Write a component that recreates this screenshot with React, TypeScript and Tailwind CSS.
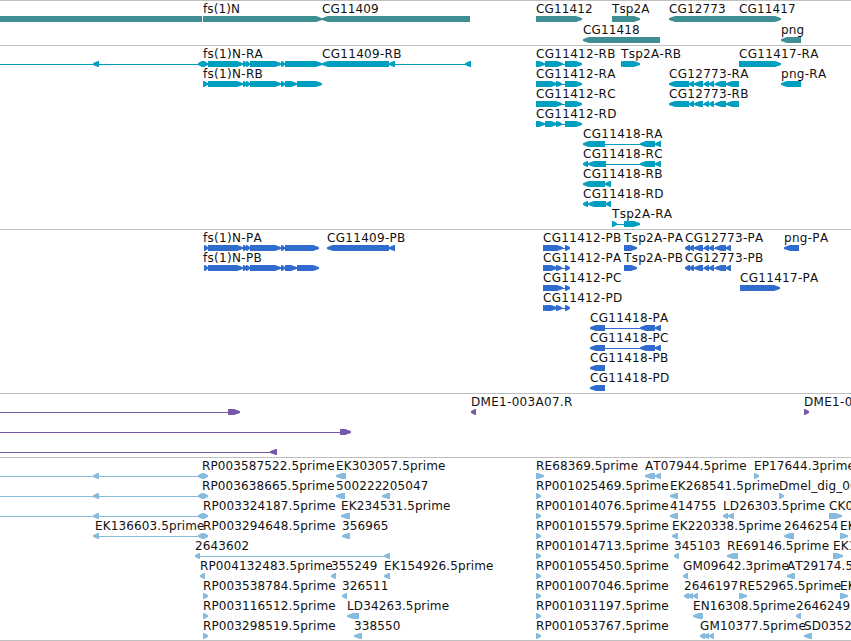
import React from 'react';

type Dir = '<' | '>' | '-';
type Block = [start: number, end: number, dir: Dir];

interface Feature {
  row: number;
  label?: string;
  x?: number;
  blocks: Block[];
  from?: number;
}

interface TrackProps {
  heightClass: string;
  colorClass: string;
  pitch?: number;
  features: Feature[];
}

const fsnStart: Block[] = [
  [208, 243, '>'],
  [243, 247, '>'],
  [246, 250, '>'],
  [250, 281, '>'],
  [281, 285, '>'],
];

const cg12773: Block[] = [
  [689, 694, '<'],
  [694, 703, '<'],
  [704, 709, '<'],
  [709, 714, '<'],
  [715, 726, '<'],
];

const upstream: Block[] = [
  [93, 99, '<'],
  [198, 203, '<'],
  [203, 208, '>'],
];

const genes: Feature[] = [
  { row: 0, blocks: [[0, 202, '-']] },
  { row: 0, label: 'fs(1)N', x: 203, blocks: [[203, 322, '>']] },
  { row: 0, label: 'CG11409', x: 322, blocks: [[322, 470, '<']] },
  { row: 0, label: 'CG11412', x: 536, blocks: [[536, 582, '>']] },
  { row: 0, label: 'Tsp2A', x: 612, blocks: [[612, 640, '>']] },
  { row: 0, label: 'CG12773', x: 669, blocks: [[669, 739, '<']] },
  { row: 0, label: 'CG11417', x: 739, blocks: [[739, 781, '>']] },
  { row: 1, label: 'CG11418', x: 583, blocks: [[583, 660, '<']] },
  { row: 1, label: 'png', x: 781, blocks: [[781, 801, '<']] },
];

const transcripts: Feature[] = [
  { row: 0, label: 'fs(1)N-RA', x: 203, from: 0, blocks: [...upstream, ...fsnStart, [285, 322, '>']] },
  { row: 1, label: 'fs(1)N-RB', x: 203, blocks: [[203, 208, '>'], ...fsnStart, [285, 297, '>'], [297, 322, '>']] },
  { row: 0, label: 'CG11409-RB', x: 322, blocks: [[322, 389, '<'], [389, 395, '<'], [465, 471, '<']] },
  { row: 0, label: 'CG11412-RB', x: 536, blocks: [[536, 545, '>'], [545, 563, '>'], [565, 582, '>']] },
  { row: 1, label: 'CG11412-RA', x: 536, blocks: [[536, 557, '>'], [556, 562, '>'], [565, 582, '>']] },
  { row: 2, label: 'CG11412-RC', x: 536, blocks: [[536, 562, '>'], [565, 582, '>']] },
  { row: 3, label: 'CG11412-RD', x: 536, blocks: [[536, 545, '>'], [545, 557, '>'], [556, 562, '>'], [565, 582, '>']] },
  { row: 0, label: 'Tsp2A-RB', x: 621, blocks: [[621, 625, '>'], [623, 640, '>']] },
  { row: 0, label: 'CG11417-RA', x: 739, blocks: [[739, 781, '>']] },
  { row: 1, label: 'CG12773-RA', x: 669, blocks: [[669, 689, '<'], ...cg12773, [726, 739, '<']] },
  { row: 2, label: 'CG12773-RB', x: 669, blocks: [[669, 689, '<'], ...cg12773, [726, 739, '<']] },
  { row: 1, label: 'png-RA', x: 781, blocks: [[781, 801, '<']] },
  { row: 4, label: 'CG11418-RA', x: 583, blocks: [[583, 605, '<'], [640, 655, '<'], [655, 661, '<']] },
  { row: 5, label: 'CG11418-RC', x: 583, blocks: [[583, 588, '<'], [588, 606, '<'], [640, 655, '<'], [655, 661, '<']] },
  { row: 6, label: 'CG11418-RB', x: 583, blocks: [[583, 605, '<'], [605, 611, '<']] },
  { row: 7, label: 'CG11418-RD', x: 583, blocks: [[583, 588, '<'], [588, 606, '<'], [606, 611, '<']] },
  { row: 8, label: 'Tsp2A-RA', x: 612, blocks: [[612, 617, '>'], [624, 640, '>']] },
];

const proteins: Feature[] = [
  { row: 0, label: 'fs(1)N-PA', x: 203, blocks: [[204, 208, '>'], ...fsnStart, [285, 319, '>']] },
  { row: 1, label: 'fs(1)N-PB', x: 203, blocks: [[204, 208, '>'], ...fsnStart, [285, 297, '>'], [297, 319, '>']] },
  { row: 0, label: 'CG11409-PB', x: 327, blocks: [[327, 389, '<'], [389, 395, '<']] },
  { row: 0, label: 'CG11412-PB', x: 543, blocks: [[543, 563, '>'], [565, 570, '>']] },
  { row: 1, label: 'CG11412-PA', x: 543, blocks: [[543, 557, '>'], [556, 562, '>'], [565, 570, '>']] },
  { row: 2, label: 'CG11412-PC', x: 543, blocks: [[543, 563, '>'], [565, 570, '>']] },
  { row: 3, label: 'CG11412-PD', x: 543, blocks: [[543, 547, '>'], [545, 557, '>'], [556, 562, '>'], [565, 570, '>']] },
  { row: 0, label: 'Tsp2A-PA', x: 624, blocks: [[624, 637, '>']] },
  { row: 1, label: 'Tsp2A-PB', x: 624, blocks: [[624, 637, '>']] },
  { row: 0, label: 'CG12773-PA', x: 685, blocks: [[685, 690, '<'], ...cg12773, [726, 731, '<']] },
  { row: 1, label: 'CG12773-PB', x: 685, blocks: [[685, 690, '<'], ...cg12773, [726, 731, '<']] },
  { row: 0, label: 'png-PA', x: 784, blocks: [[784, 799, '<']] },
  { row: 2, label: 'CG11417-PA', x: 740, blocks: [[740, 780, '>']] },
  { row: 4, label: 'CG11418-PA', x: 590, blocks: [[590, 605, '<'], [640, 655, '<'], [655, 661, '<']] },
  { row: 5, label: 'CG11418-PC', x: 590, blocks: [[590, 605, '<'], [640, 655, '<'], [655, 661, '<']] },
  { row: 6, label: 'CG11418-PB', x: 590, blocks: [[590, 605, '<']] },
  { row: 7, label: 'CG11418-PD', x: 590, blocks: [[590, 605, '<']] },
];

const clones: Feature[] = [
  { row: 0, from: 0, blocks: [[228, 240, '>']] },
  { row: 1, from: 0, blocks: [[340, 351, '>']] },
  { row: 2, from: 0, blocks: [[270, 277, '<']] },
  { row: 0, label: 'DME1-003A07.R', x: 471, blocks: [[471, 476, '<']] },
  { row: 0, label: 'DME1-0', x: 804, blocks: [[804, 809, '>']] },
];

const ests: Feature[] = [
  { row: 0, label: 'RP003587522.5prime', x: 202, from: 0, blocks: upstream },
  { row: 1, label: 'RP003638665.5prime', x: 202, from: 0, blocks: upstream },
  { row: 2, label: 'RP003324187.5prime', x: 203, from: 0, blocks: upstream },
  { row: 3, label: 'EK136603.5prime', x: 95, blocks: [] },
  { row: 3, label: 'RP003294648.5prime', x: 203, blocks: upstream },
  { row: 4, label: '2643602', x: 195, blocks: [[195, 200, '<'], [384, 390, '<']] },
  { row: 5, label: 'RP004132483.5prime', x: 200, blocks: [[200, 205, '<']] },
  { row: 6, label: 'RP003538784.5prime', x: 203, blocks: [[203, 208, '>']] },
  { row: 7, label: 'RP003116512.5prime', x: 203, blocks: [[203, 208, '>']] },
  { row: 8, label: 'RP003298519.5prime', x: 203, blocks: [[203, 208, '>']] },

  { row: 0, label: 'EK303057.5prime', x: 336, blocks: [[336, 346, '<']] },
  { row: 1, label: '500222', x: 336, blocks: [[336, 345, '<']] },
  { row: 1, label: '205047', x: 382, blocks: [[382, 390, '<']] },
  { row: 2, label: 'EK234531.5prime', x: 341, blocks: [[341, 350, '<']] },
  { row: 3, label: '356965', x: 342, blocks: [[342, 350, '<']] },
  { row: 5, label: '355249', x: 331, blocks: [[331, 336, '<']] },
  { row: 5, label: 'EK154926.5prime', x: 384, blocks: [[384, 390, '<']] },
  { row: 6, label: '326511', x: 342, blocks: [[342, 347, '<']] },
  { row: 7, label: 'LD34263.5prime', x: 347, blocks: [[347, 359, '<']] },
  { row: 8, label: '338550', x: 354, blocks: [[354, 362, '<']] },

  { row: 0, label: 'RE68369.5prime', x: 536, blocks: [[536, 544, '>']] },
  { row: 1, label: 'RP001025469.5prime', x: 536, blocks: [[536, 541, '>']] },
  { row: 2, label: 'RP001014076.5prime', x: 536, blocks: [[536, 541, '>']] },
  { row: 3, label: 'RP001015579.5prime', x: 536, blocks: [[536, 541, '>']] },
  { row: 4, label: 'RP001014713.5prime', x: 536, blocks: [[536, 541, '>']] },
  { row: 5, label: 'RP001055450.5prime', x: 536, blocks: [[536, 541, '>']] },
  { row: 6, label: 'RP001007046.5prime', x: 536, blocks: [[536, 541, '>']] },
  { row: 7, label: 'RP001031197.5prime', x: 536, blocks: [[536, 541, '>']] },
  { row: 8, label: 'RP001053767.5prime', x: 536, blocks: [[536, 541, '>']] },

  { row: 0, label: 'AT07944.5prime', x: 645, blocks: [[645, 655, '<'], [655, 661, '<']] },
  { row: 0, label: 'EP17644.3prime', x: 754, blocks: [[754, 759, '>']] },
  { row: 1, label: 'EK268541.5prime', x: 670, blocks: [[670, 678, '<']] },
  { row: 1, label: 'Dmel_dig_00', x: 779, blocks: [[779, 784, '>']] },
  { row: 2, label: '414755', x: 670, blocks: [[670, 678, '<']] },
  { row: 2, label: 'LD26303.5prime', x: 723, blocks: [[723, 728, '<'], [728, 734, '<']] },
  { row: 2, label: 'CK0', x: 829, blocks: [[829, 842, '>']] },
  { row: 3, label: 'EK220338.5prime', x: 672, blocks: [[672, 678, '<']] },
  { row: 3, label: '2646254', x: 784, blocks: [[784, 794, '<']] },
  { row: 3, label: 'EK', x: 840, blocks: [[840, 848, '>']] },
  { row: 4, label: '345103', x: 674, blocks: [[674, 679, '<']] },
  { row: 4, label: 'RE69146.5prime', x: 727, blocks: [[727, 738, '<']] },
  { row: 4, label: 'EK1', x: 833, blocks: [[833, 843, '>']] },
  { row: 5, label: 'GM09642.3prime', x: 683, blocks: [[683, 688, '<']] },
  { row: 5, label: 'AT29174.5', x: 787, blocks: [[787, 795, '<']] },
  { row: 6, label: '2646197', x: 684, blocks: [[684, 689, '<'], [688, 693, '<'], [693, 698, '<']] },
  { row: 6, label: 'RE52965.5prime', x: 739, blocks: [[739, 747, '>']] },
  { row: 6, label: 'EK', x: 840, blocks: [[840, 848, '>']] },
  { row: 7, label: 'EN16308.5prime', x: 693, blocks: [[693, 703, '<']] },
  { row: 7, label: '2646249', x: 796, blocks: [[796, 801, '<']] },
  { row: 8, label: 'GM10377.5prime', x: 700, blocks: [[700, 705, '<'], [704, 709, '<'], [709, 714, '<']] },
  { row: 8, label: 'SD0352', x: 804, blocks: [[804, 812, '<']] },
];

// Outline of one exon, with a rounded, blunt tip on the strand side
const blockPoints = ([start, end, dir]: Block, top: number) => {
  if (dir === '-') {
    return `${start},${top} ${end},${top} ${end},${top + 6} ${start},${top + 6}`;
  }
  const tip = Math.min(end - start - 1, 6);
  const base = dir === '>' ? start : end;
  const at = (d: number) => (dir === '>' ? end - d : start + d);
  return [
    [base, top],
    [at(tip), top],
    [at(tip / 2), top + 1],
    [at(0), top + 2.3],
    [at(0), top + 4],
    [at(tip / 2), top + 5],
    [at(tip), top + 6],
    [base, top + 6],
  ]
    .map((p) => p.join(','))
    .join(' ');
};

const Track: React.FC<TrackProps> = ({ heightClass, colorClass, pitch = 20, features }) => (
  <section className={`w-full border-t border-[#bfbfbf] overflow-hidden ${heightClass}`}>
    <svg className={`block w-full h-full ${colorClass}`} fill="currentColor">
      {features.map((f, i) => {
        const top = 15 + f.row * pitch;
        const first = f.from ?? f.blocks[0]?.[0] ?? 0;
        const last = f.blocks[f.blocks.length - 1]?.[1] ?? first;
        return (
          <g key={i}>
            {last > first && <rect x={first} y={top + 3} width={last - first - 1} height={1} />}
            {f.blocks.map((b, j) => (
              <polygon key={j} points={blockPoints(b, top)} />
            ))}
            {f.label && (
              <text
                x={f.x}
                y={top - 3}
                className={`fill-[#111] ${f.label.includes('-') ? 'tracking-[0.3px]' : 'tracking-[0.12px]'}`}
              >
                {f.label}
              </text>
            )}
          </g>
        );
      })}
    </svg>
  </section>
);

export default function App() {
  return (
    <main className="w-[851px] h-[641px] flex flex-col overflow-hidden bg-white border-b border-[#bfbfbf] text-[12px] [font-kerning:none] font-['DejaVu_Sans',sans-serif]">
      <Track heightClass="h-[45px]" colorClass="text-[#3f8e93]" pitch={21} features={genes} />
      <Track heightClass="h-[184px]" colorClass="text-[#009fc0]" features={transcripts} />
      <Track heightClass="h-[164px]" colorClass="text-[#2f6ccd]" features={proteins} />
      <Track heightClass="h-[64px]" colorClass="text-[#7558a7]" features={clones} />
      <Track heightClass="h-[183px]" colorClass="text-[#86bbdd]" features={ests} />
    </main>
  );
}
